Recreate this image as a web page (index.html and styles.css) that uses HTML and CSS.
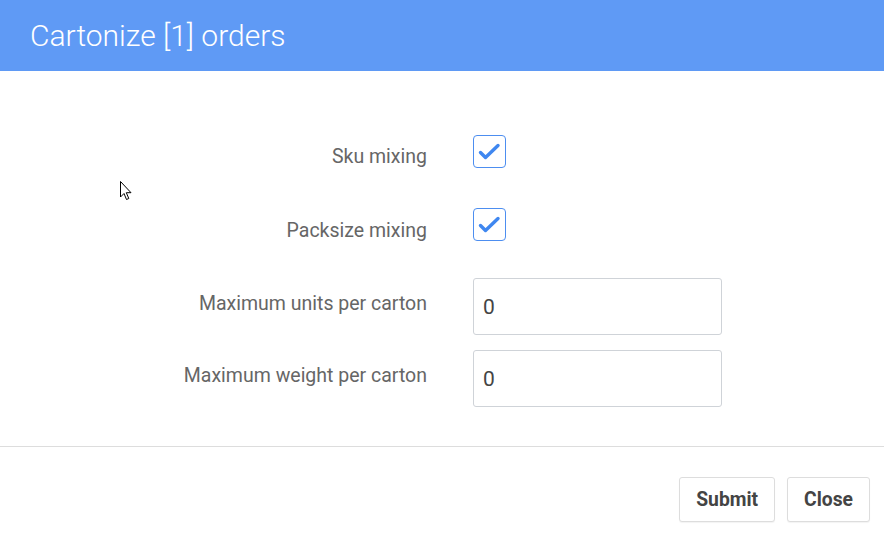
FILE: index.html
```html
<!DOCTYPE html>
<html>
<head>
<meta charset="utf-8">
<link rel="stylesheet" href="styles.css">
</head>
<body>
<div class="modal">
  <header class="modal-header">
    <h1 class="modal-title">Cartonize [1] orders</h1>
  </header>
  <main class="modal-body">
    <div class="form-row row-check">
      <label class="form-label">Sku mixing</label>
      <div class="form-control">
        <span class="checkbox">
          <svg viewBox="0 0 33 33" width="33" height="33"><path d="M7.5 17.5 L12.5 22.5 L25 10.5" fill="none" stroke="#3f87f0" stroke-width="3.4" stroke-linecap="round" stroke-linejoin="round"/></svg>
        </span>
      </div>
    </div>
    <div class="form-row row-check2">
      <label class="form-label">Packsize mixing</label>
      <div class="form-control">
        <span class="checkbox">
          <svg viewBox="0 0 33 33" width="33" height="33"><path d="M7.5 17.5 L12.5 22.5 L25 10.5" fill="none" stroke="#3f87f0" stroke-width="3.4" stroke-linecap="round" stroke-linejoin="round"/></svg>
        </span>
      </div>
    </div>
    <div class="form-row row-input">
      <label class="form-label">Maximum units per carton</label>
      <div class="form-control">
        <div class="text-input">0</div>
      </div>
    </div>
    <div class="form-row row-input last">
      <label class="form-label">Maximum weight per carton</label>
      <div class="form-control">
        <div class="text-input">0</div>
      </div>
    </div>
  </main>
  <footer class="modal-footer">
    <button class="btn">Submit</button>
    <button class="btn">Close</button>
  </footer>
  <svg class="cursor" viewBox="0 0 12 20" width="12" height="20"><path d="M0.5 0.5 L0.5 16 L4 12.5 L6.5 18.5 L8.8 17.5 L6.3 11.7 L11 11.7 Z" fill="#ffffff" stroke="#000000" stroke-width="1" stroke-linejoin="miter"/></svg>
</div>
</body>
</html>
```

FILE: styles.css
```css
html, body {
  margin: 0;
  padding: 0;
  background: #ffffff;
  font-family: Roboto, "Noto Sans", Arial, sans-serif;
}

.modal {
  width: 884px;
  height: 536px;
  display: flex;
  flex-direction: column;
  position: relative;
}

.modal-header {
  height: 71px;
  background: #5f9af5;
  display: flex;
  align-items: center;
  padding: 0 30px;
  box-sizing: border-box;
}

.modal-title {
  margin: 0;
  font-size: 30px;
  font-weight: 300;
  color: #ffffff;
  line-height: 1;
  padding-top: 1px;
}

.modal-body {
  padding-top: 64px;
  padding-bottom: 39px;
  border-bottom: 1px solid #dddddd;
}

.form-row {
  display: grid;
  grid-template-columns: 427px 1fr;
  column-gap: 46px;
}

.row-check {
  height: 73px;
}

.row-check2 {
  height: 70px;
}

.row-input {
  height: 72px;
}

.row-input.last {
  height: 57px;
}

.form-label {
  text-align: right;
  font-size: 19.5px;
  color: #666666;
  line-height: 22px;
}

.row-check .form-label {
  padding-top: 11px;
}

.row-check2 .form-label {
  padding-top: 12px;
}

.row-input .form-label {
  padding-top: 15px;
}

.checkbox {
  display: block;
  width: 33px;
  height: 33px;
  box-sizing: border-box;
  border: 1px solid #4d8ef0;
  border-radius: 4px;
}

.checkbox svg {
  display: block;
  margin: -1px;
}

.text-input {
  width: 249px;
  height: 57px;
  box-sizing: border-box;
  border: 1px solid #cfd3d8;
  border-radius: 3px;
  padding: 0 9px;
  display: flex;
  align-items: center;
  font-size: 21px;
  color: #444444;
}

.modal-footer {
  display: flex;
  justify-content: flex-end;
  gap: 12px;
  padding: 30px 14px 0 0;
}

.btn {
  height: 45px;
  padding: 0 16px;
  border: 1px solid #dddddd;
  border-radius: 3px;
  background: #ffffff;
  font-family: Roboto, "Noto Sans", Arial, sans-serif;
  font-size: 19.3px;
  font-weight: 700;
  color: #444444;
  box-shadow: 0 1px 1px rgba(0,0,0,0.05);
}

.cursor {
  position: absolute;
  left: 120px;
  top: 181px;
}
```
